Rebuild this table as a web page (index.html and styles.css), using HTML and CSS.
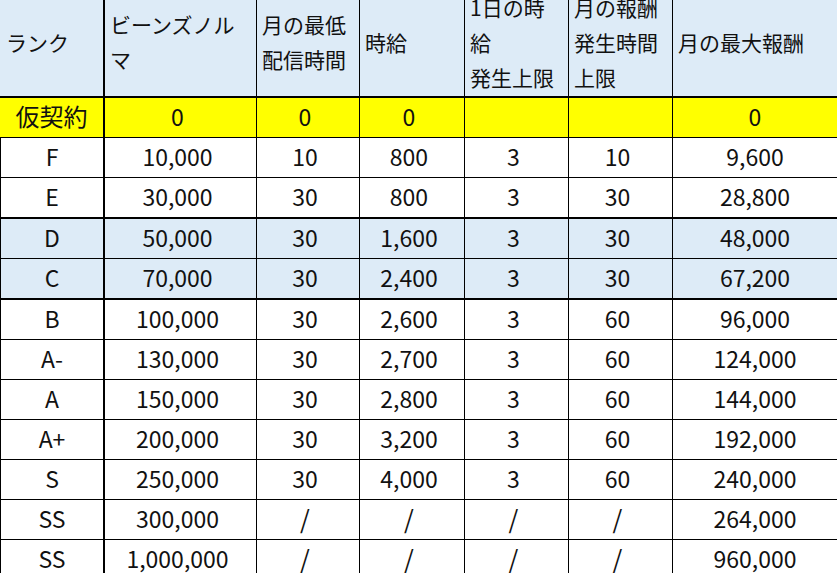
FILE: index.html
```html
<!DOCTYPE html>
<html lang="ja">
<head>
<meta charset="utf-8">
<title>ランク表</title>
<link rel="stylesheet" href="styles.css">
</head>
<body>
<div class="sheet">
  <div class="row head">
    <div class="cell first">ランク</div>
    <div class="cell">ビーンズノル<br>マ</div>
    <div class="cell">月の最低<br>配信時間</div>
    <div class="cell">時給</div>
    <div class="cell">1日の時<br>給<br>発生上限</div>
    <div class="cell">月の報酬<br>発生時間<br>上限</div>
    <div class="cell">月の最大報酬</div>
  </div>
  <div class="row yellow">
    <div class="cell first">仮契約</div>
    <div class="cell">0</div>
    <div class="cell">0</div>
    <div class="cell">0</div>
    <div class="cell"></div>
    <div class="cell"></div>
    <div class="cell">0</div>
  </div>
  <div class="row">
    <div class="cell first">F</div>
    <div class="cell">10,000</div>
    <div class="cell">10</div>
    <div class="cell">800</div>
    <div class="cell">3</div>
    <div class="cell">10</div>
    <div class="cell">9,600</div>
  </div>
  <div class="row thick">
    <div class="cell first">E</div>
    <div class="cell">30,000</div>
    <div class="cell">30</div>
    <div class="cell">800</div>
    <div class="cell">3</div>
    <div class="cell">30</div>
    <div class="cell">28,800</div>
  </div>
  <div class="row blue">
    <div class="cell first">D</div>
    <div class="cell">50,000</div>
    <div class="cell">30</div>
    <div class="cell">1,600</div>
    <div class="cell">3</div>
    <div class="cell">30</div>
    <div class="cell">48,000</div>
  </div>
  <div class="row blue thick">
    <div class="cell first">C</div>
    <div class="cell">70,000</div>
    <div class="cell">30</div>
    <div class="cell">2,400</div>
    <div class="cell">3</div>
    <div class="cell">30</div>
    <div class="cell">67,200</div>
  </div>
  <div class="row">
    <div class="cell first">B</div>
    <div class="cell">100,000</div>
    <div class="cell">30</div>
    <div class="cell">2,600</div>
    <div class="cell">3</div>
    <div class="cell">60</div>
    <div class="cell">96,000</div>
  </div>
  <div class="row">
    <div class="cell first">A-</div>
    <div class="cell">130,000</div>
    <div class="cell">30</div>
    <div class="cell">2,700</div>
    <div class="cell">3</div>
    <div class="cell">60</div>
    <div class="cell">124,000</div>
  </div>
  <div class="row">
    <div class="cell first">A</div>
    <div class="cell">150,000</div>
    <div class="cell">30</div>
    <div class="cell">2,800</div>
    <div class="cell">3</div>
    <div class="cell">60</div>
    <div class="cell">144,000</div>
  </div>
  <div class="row">
    <div class="cell first">A+</div>
    <div class="cell">200,000</div>
    <div class="cell">30</div>
    <div class="cell">3,200</div>
    <div class="cell">3</div>
    <div class="cell">60</div>
    <div class="cell">192,000</div>
  </div>
  <div class="row">
    <div class="cell first">S</div>
    <div class="cell">250,000</div>
    <div class="cell">30</div>
    <div class="cell">4,000</div>
    <div class="cell">3</div>
    <div class="cell">60</div>
    <div class="cell">240,000</div>
  </div>
  <div class="row">
    <div class="cell first">SS</div>
    <div class="cell">300,000</div>
    <div class="cell na">/</div>
    <div class="cell na">/</div>
    <div class="cell na">/</div>
    <div class="cell na">/</div>
    <div class="cell">264,000</div>
  </div>
  <div class="row">
    <div class="cell first">SS</div>
    <div class="cell">1,000,000</div>
    <div class="cell na">/</div>
    <div class="cell na">/</div>
    <div class="cell na">/</div>
    <div class="cell na">/</div>
    <div class="cell">960,000</div>
  </div>
</div>
</body>
</html>
```

FILE: styles.css
```css
html, body {
  margin: 0;
  padding: 0;
  background: #ffffff;
  overflow: hidden;
}

.sheet {
  display: grid;
  grid-template-columns: 105px 152px 103px 105px 104px 104px 165px;
  grid-template-rows: 98px 40px 40px 41px 40px 41px repeat(7, 40px);
  width: 838px;
  font-family: "Noto Sans CJK JP", "Noto Sans", sans-serif;
  color: #111111;
}

.row {
  display: contents;
}

.cell {
  box-sizing: border-box;
  display: flex;
  align-items: center;
  justify-content: center;
  border-right: 1px solid #000000;
  border-bottom: 1px solid #000000;
  font-size: 23px;
  line-height: 1;
  padding-bottom: 3px;
  white-space: nowrap;
  background: #ffffff;
}

.row:not(.head) .cell:nth-child(n+2):nth-child(-n+6) {
  padding-right: 6px;
}

.cell.first {
  border-left: 1px solid #000000;
  border-right: 2px solid #000000;
}

.cell.na {
  font-size: 25px;
}

.head .cell {
  background: #ddebf7;
  justify-content: flex-start;
  padding: 0 0 12px 5px;
  font-size: 21px;
  line-height: 35px;
  border-bottom: 2px solid #000000;
}

.head .cell.first {
  border-left: none;
  padding-left: 6px;
}

.yellow .cell {
  background: #ffff00;
}

.yellow .cell.first {
  border-left: none;
  font-size: 24px;
}

.blue .cell {
  background: #ddebf7;
}

.thick .cell {
  border-bottom: 2px solid #000000;
}
```
